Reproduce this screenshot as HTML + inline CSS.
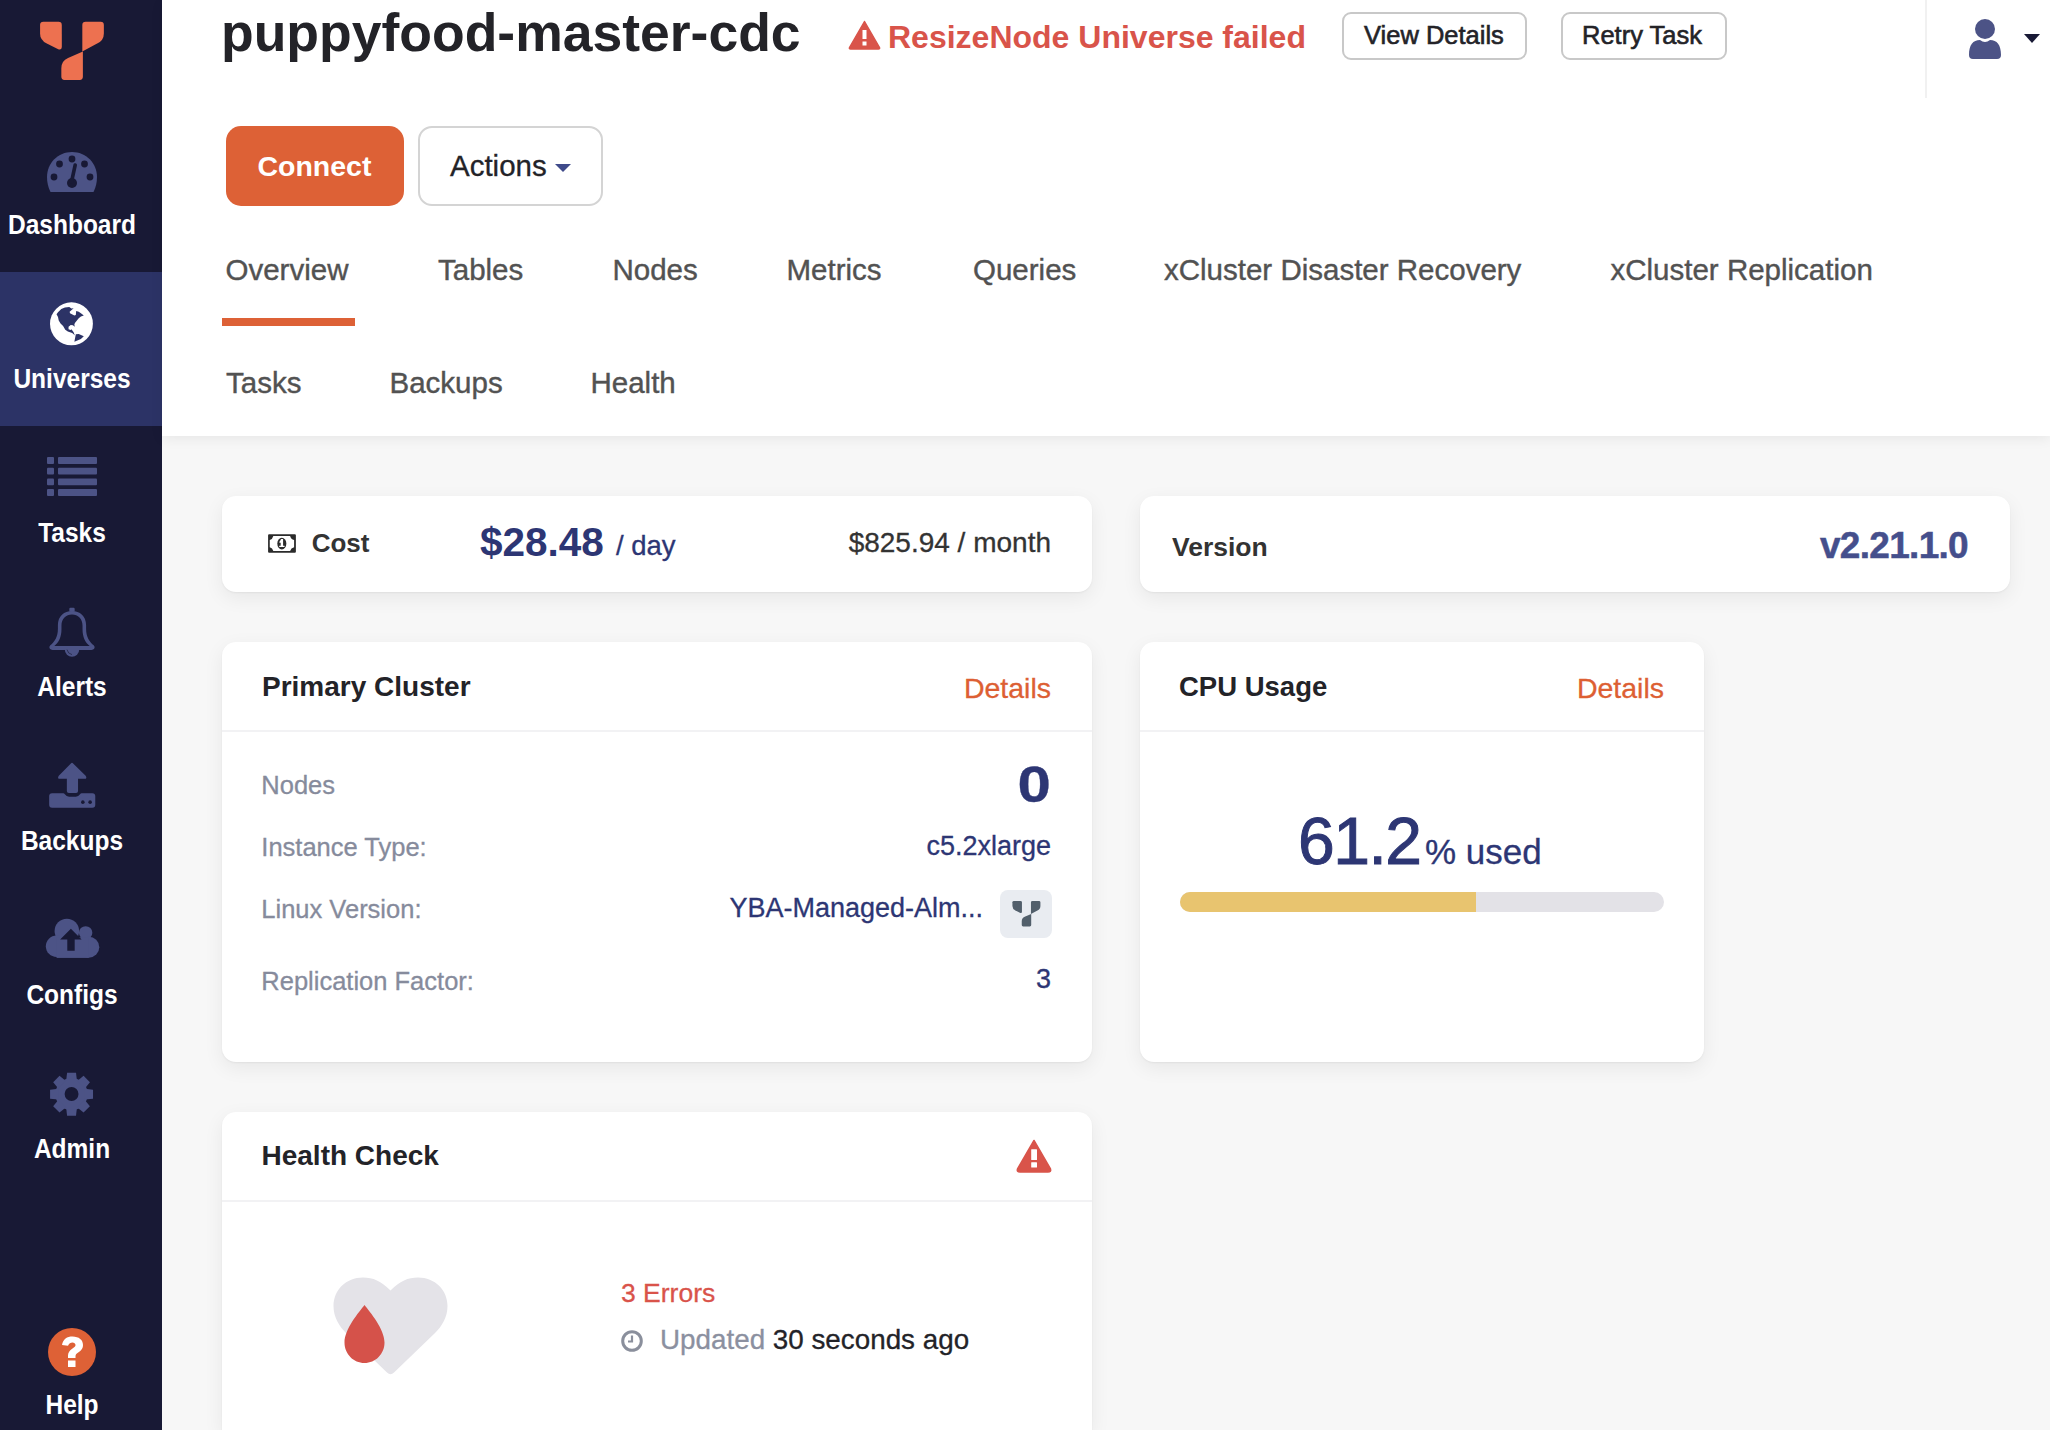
<!DOCTYPE html>
<html><head><meta charset="utf-8">
<style>
*{box-sizing:border-box;margin:0;padding:0}
html,body{width:2050px;height:1430px;overflow:hidden;background:#f7f7f7;font-family:"Liberation Sans",sans-serif}
.abs{position:absolute}
.t{position:absolute;white-space:nowrap;line-height:1}
.r{text-align:right}
.sk{-webkit-text-stroke-width:0.3px}
#side{position:absolute;left:0;top:0;width:162px;height:1430px;background:#181935}
.lbl{position:absolute;left:0;width:144px;text-align:center;color:#fff;font-weight:700;font-size:24.5px;line-height:1;white-space:nowrap;transform:scaleY(1.1);transform-origin:50% 20.7px}
#hdr{position:absolute;left:162px;top:0;width:1888px;height:436px;background:#fff;box-shadow:0 3px 12px rgba(0,0,0,0.065)}
.btn{position:absolute;border:2px solid #c8c8c8;border-radius:9px;background:#fff}
.tab{position:absolute;color:#525252;font-size:29.5px;white-space:nowrap;line-height:1;-webkit-text-stroke:0.4px #525252}
.card{position:absolute;background:#fff;border-radius:14px;box-shadow:0 1px 2px rgba(0,0,0,0.05),0 6px 20px rgba(0,0,0,0.065)}
.sep{position:absolute;left:0;right:0;height:2px;background:#f2f2f4}
.lab{position:absolute;white-space:nowrap;line-height:1;font-size:25.5px;color:#868b9c;-webkit-text-stroke:0.3px #868b9c}
.val{position:absolute;white-space:nowrap;line-height:1;font-size:27px;color:#2d3674;text-align:right;-webkit-text-stroke:0.3px #2d3674}
</style></head><body>

<div id="side">
  <!-- logo -->
  <svg class="abs" style="left:30px;top:10px" width="85" height="80" viewBox="0 0 1519 1430">
    <path d="M240 212 H510 Q568 212 568 270 V655 Q568 718 505 700 L300 600 Q180 540 180 420 V270 Q180 212 240 212 Z" fill="#ed7150"/>
    <path d="M995 212 H1262 Q1320 212 1320 270 V420 Q1320 545 1200 600 L935 742 V270 Q935 212 995 212 Z" fill="#ed7150"/>
    <path d="M945 740 V1195 Q945 1250 890 1250 H615 Q560 1250 560 1195 V1040 Q560 910 680 858 Z" fill="#ed7150"/>
  </svg>

  <!-- Dashboard -->
  <svg class="abs" style="left:47px;top:152px" width="50" height="40" viewBox="0 0 50 40">
    <path d="M25 0 C11 0 0 11 0 25 C0 30 1 35 3.5 40 H46.5 C49 35 50 30 50 25 C50 11 39 0 25 0 Z" fill="#4c5386"/>
    <circle cx="25" cy="7" r="3.4" fill="#181935"/>
    <circle cx="12.5" cy="12" r="3.4" fill="#181935"/>
    <circle cx="37.5" cy="12" r="3.4" fill="#181935"/>
    <circle cx="7" cy="25" r="3.4" fill="#181935"/>
    <circle cx="43" cy="25" r="3.4" fill="#181935"/>
    <circle cx="25" cy="31" r="5" fill="#181935"/>
    <path d="M24.5 30 L28.2 13" stroke="#181935" stroke-width="3.6" stroke-linecap="round"/>
  </svg>
  <div class="lbl" style="top:214px">Dashboard</div>

  <!-- Universes -->
  <div class="abs" style="left:0;top:272px;width:162px;height:154px;background:#2c3366"></div>
  <svg class="abs" style="left:46px;top:298px" width="52" height="52" viewBox="0 0 1430 1430">
    <circle cx="700" cy="710" r="590" fill="#fff"/>
    <path d="M290 450 L330 390 L420 300 L520 260 L640 250 L700 290 L760 280 L650 380 L660 420 L780 480 L820 470 L830 360 L900 380 L960 420 L1040 480 L960 510 L900 560 L850 620 L800 680 L780 720 L790 790 L740 750 L680 740 L620 790 L620 860 L680 880 L700 860 L760 940 L780 1000 L800 1030 L720 960 L600 920 L530 870 L470 770 L400 700 L350 620 L330 520 Z" fill="#2c3366"/>
    <path d="M820 1000 L900 990 L1040 1050 L960 1130 L780 1200 L800 1100 Z" fill="#2c3366"/>
  </svg>
  <div class="lbl" style="top:368px">Universes</div>

  <!-- Tasks -->
  <svg class="abs" style="left:47px;top:457px" width="50" height="39" viewBox="0 0 50 39">
    <g fill="#4c5386"><rect x="0" y="0" width="7" height="6.9" rx="1"/><rect x="11" y="0" width="39" height="6.9" rx="1"/><rect x="0" y="10.7" width="7" height="6.9" rx="1"/><rect x="11" y="10.7" width="39" height="6.9" rx="1"/><rect x="0" y="21.4" width="7" height="6.9" rx="1"/><rect x="11" y="21.4" width="39" height="6.9" rx="1"/><rect x="0" y="32.1" width="7" height="6.9" rx="1"/><rect x="11" y="32.1" width="39" height="6.9" rx="1"/></g>
  </svg>
  <div class="lbl" style="top:522px">Tasks</div>

  <!-- Alerts -->
  <svg class="abs" style="left:40px;top:600px" width="64" height="64" viewBox="0 0 1430 1430">
    <path d="M715 245 C540 245 400 360 400 560 L400 640 C400 820 330 930 230 1010 Q190 1050 220 1090 Q240 1115 280 1115 H1150 Q1190 1115 1210 1090 Q1240 1050 1200 1010 C1100 930 1030 820 1030 640 L1030 560 C1030 360 890 245 715 245 Z" fill="#4c5386"/>
    <path d="M715 325 C580 325 480 420 480 570 L480 650 C480 830 420 950 320 1030 H1110 C1010 950 950 830 950 650 L950 570 C950 420 850 325 715 325 Z" fill="#181935"/>
    <rect x="655" y="175" width="120" height="90" rx="25" fill="#4c5386"/>
    <path d="M555 1110 A160 160 0 0 0 875 1110 Z" fill="#4c5386"/>
    <path d="M605 1110 Q620 1200 715 1220" fill="none" stroke="#181935" stroke-width="14"/>
  </svg>
  <div class="lbl" style="top:676px">Alerts</div>

  <!-- Backups -->
  <svg class="abs" style="left:40px;top:752px" width="64" height="64" viewBox="0 0 1430 1430">
    <path d="M690 255 Q715 230 740 255 L1020 530 Q1060 600 1000 600 H850 V870 Q850 915 805 915 H645 Q600 915 600 870 V600 H440 Q380 600 420 530 Z" fill="#4c5386"/>
    <path d="M270 920 H520 Q540 920 555 945 Q590 1000 650 1000 H800 Q860 1000 895 945 Q910 920 930 920 H1170 Q1235 920 1235 985 V1180 Q1235 1245 1170 1245 H270 Q205 1245 205 1180 V985 Q205 920 270 920 Z" fill="#4c5386"/>
    <circle cx="957" cy="1120" r="40" fill="#181935"/><circle cx="1120" cy="1120" r="40" fill="#181935"/>
  </svg>
  <div class="lbl" style="top:830px">Backups</div>

  <!-- Configs -->
  <svg class="abs" style="left:40px;top:906px" width="64" height="64" viewBox="0 0 1430 1430">
    <g fill="#4c5386">
      <circle cx="600" cy="560" r="275"/>
      <circle cx="1020" cy="600" r="150"/>
      <circle cx="1090" cy="920" r="235"/>
      <circle cx="370" cy="900" r="240"/>
      <rect x="370" y="700" width="720" height="460"/>
    </g>
    <path d="M690 510 L930 750 H775 V1000 H610 V750 H450 Z" fill="#181935"/>
  </svg>
  <div class="lbl" style="top:984px">Configs</div>

  <!-- Admin -->
  <svg class="abs" style="left:40px;top:1062px" width="64" height="64" viewBox="0 0 1430 1430">
    <g transform="translate(705 720)" fill="#4c5386">
      <circle r="360"/>
      <path d="M-100 -480 H100 L120 -300 H-120 Z" transform="rotate(0)"/><path d="M-100 -480 H100 L120 -300 H-120 Z" transform="rotate(45)"/><path d="M-100 -480 H100 L120 -300 H-120 Z" transform="rotate(90)"/><path d="M-100 -480 H100 L120 -300 H-120 Z" transform="rotate(135)"/><path d="M-100 -480 H100 L120 -300 H-120 Z" transform="rotate(180)"/><path d="M-100 -480 H100 L120 -300 H-120 Z" transform="rotate(225)"/><path d="M-100 -480 H100 L120 -300 H-120 Z" transform="rotate(270)"/><path d="M-100 -480 H100 L120 -300 H-120 Z" transform="rotate(315)"/>
    </g>
    <circle cx="705" cy="715" r="155" fill="#181935"/>
  </svg>
  <div class="lbl" style="top:1138px">Admin</div>

  <!-- Help -->
  <svg class="abs" style="left:48px;top:1328px" width="48" height="48" viewBox="0 0 48 48">
    <circle cx="24" cy="24" r="24" fill="#de6136"/>
    <path d="M14 17 C15 11 19 8.5 24.5 8.5 C31 8.5 35 12 35 17 C35 21 32.5 23 29.5 25 C28 26 27.5 27 27.5 28.5 V30 H20 V27.5 C20 24.5 21.5 22.5 24.5 20.5 C26.5 19.2 27.5 18.5 27.5 17 C27.5 15.5 26 14.5 24.5 14.5 C22.5 14.5 21 15.7 20 17.7 Z" fill="#fff"/>
    <rect x="20" y="32.5" width="7.5" height="6.5" fill="#fff"/>
  </svg>
  <div class="lbl" style="top:1394px">Help</div>
</div>

<div id="hdr"></div>
<!-- header content (page coords) -->
<div class="t" style="left:221px;top:6.2px;font-size:53.5px;font-weight:700;color:#232328">puppyfood-master-cdc</div>
<svg class="abs" style="left:848px;top:20px" width="33" height="30" viewBox="0 0 33 30">
  <path d="M16.5 1.5 L31.5 27.5 Q32 29 30.5 29 H2.5 Q1 29 1.5 27.5 Z" fill="#d9544a" stroke="#d9544a" stroke-width="1.5" stroke-linejoin="round"/>
  <rect x="14.5" y="10" width="4" height="9" fill="#fff"/><rect x="14.5" y="21.5" width="4" height="4" fill="#fff"/>
</svg>
<div class="t" style="left:888px;top:21.2px;font-size:32px;font-weight:700;color:#d9544a">ResizeNode Universe failed</div>
<div class="btn" style="left:1342px;top:12px;width:185px;height:48px"></div>
<div class="t" style="left:1364px;top:22.5px;font-size:25.5px;color:#232328;-webkit-text-stroke:0.6px #232328">View Details</div>
<div class="btn" style="left:1561px;top:12px;width:166px;height:48px"></div>
<div class="t" style="left:1582px;top:22.5px;font-size:25.5px;color:#232328;-webkit-text-stroke:0.6px #232328">Retry Task</div>
<div class="abs" style="left:1925px;top:0;width:2px;height:98px;background:#f1f1f1"></div>
<svg class="abs" style="left:1968px;top:19px" width="34" height="40" viewBox="0 0 34 40">
  <circle cx="17" cy="10" r="10" fill="#4c5386"/>
  <path d="M1 36 C1 26 5 21 12 21 Q17 25 22 21 C29 21 33 26 33 36 Q33 40 29 40 H5 Q1 40 1 36 Z" fill="#4c5386"/>
</svg>
<svg class="abs" style="left:2024px;top:34px" width="16" height="9" viewBox="0 0 16 9"><path d="M0 0 H16 L8 9 Z" fill="#181935"/></svg>

<div class="abs" style="left:226px;top:126px;width:178px;height:80px;background:#dd6136;border-radius:15px"></div>
<div class="t" style="left:257.4px;top:151.8px;font-size:28.5px;font-weight:700;color:#fff">Connect</div>
<div class="btn" style="left:418px;top:126px;width:185px;height:80px;border-radius:14px;border-color:#d4d4d4"></div>
<div class="sk t" style="left:450px;top:150.9px;font-size:29.5px;color:#232328">Actions</div>
<svg class="abs" style="left:555px;top:164px" width="16" height="8" viewBox="0 0 16 8"><path d="M0 0 H16 L8 8 Z" fill="#3f4a8a"/></svg>

<div class="tab" style="left:225.5px;top:254.8px">Overview</div>
<div class="abs" style="left:222px;top:318px;width:133px;height:8px;background:#dd6136"></div>
<div class="tab" style="left:438px;top:254.8px">Tables</div>
<div class="tab" style="left:612.5px;top:254.8px">Nodes</div>
<div class="tab" style="left:786.5px;top:254.8px">Metrics</div>
<div class="tab" style="left:973px;top:254.8px">Queries</div>
<div class="tab" style="left:1164px;top:254.8px">xCluster Disaster Recovery</div>
<div class="tab" style="left:1610.5px;top:254.8px">xCluster Replication</div>
<div class="tab" style="left:226px;top:367.7px">Tasks</div>
<div class="tab" style="left:389.5px;top:367.7px">Backups</div>
<div class="tab" style="left:590.5px;top:367.7px">Health</div>

<!-- Cost card -->
<div class="card" style="left:222px;top:496px;width:870px;height:96px"></div>
<svg class="abs" style="left:262px;top:528px" width="40" height="30" viewBox="0 0 1907 1430">
  <path fill-rule="evenodd" d="M340 300 H1565 Q1615 300 1615 350 V1135 Q1615 1185 1565 1185 H340 Q290 1185 290 1135 V350 Q290 300 340 300 Z M540 380 H1340 Q1380 540 1530 570 V920 Q1380 950 1340 1100 H540 Q500 950 370 920 V570 Q500 540 540 380 Z" fill="#2b2b2b"/>
  <ellipse cx="945" cy="745" rx="215" ry="275" fill="#2b2b2b"/>
  <path d="M905 530 H1005 V850 H1075 V905 H820 V850 H890 V700 H830 V650 Q885 610 905 530 Z" fill="#fff"/>
</svg>
<div class="t" style="left:311.7px;top:530.4px;font-size:26px;font-weight:700;color:#333">Cost</div>
<div class="t" style="left:480px;top:521.7px;font-size:40.5px;font-weight:700;color:#2d3674">$28.48</div>
<div class="sk t" style="left:616px;top:531.7px;font-size:27.5px;color:#2d3674">/ day</div>
<div class="sk t r" style="right:999px;top:529.1px;font-size:28px;color:#333">$825.94 / month</div>

<!-- Version card -->
<div class="card" style="left:1140px;top:496px;width:870px;height:96px"></div>
<div class="t" style="left:1172px;top:533.6px;font-size:26.5px;font-weight:700;color:#333">Version</div>
<div class="t r" style="right:82px;top:526.9px;font-size:37px;font-weight:700;color:#454f8c;letter-spacing:-0.7px;-webkit-text-stroke:0.5px #454f8c">v2.21.1.0</div>

<!-- Primary cluster card -->
<div class="card" style="left:222px;top:642px;width:870px;height:420px">
  <div class="sep" style="top:88px"></div>
</div>
<div class="t" style="left:262px;top:672.5px;font-size:28px;font-weight:700;color:#232328">Primary Cluster</div>
<div class="sk t r" style="right:999px;top:673.7px;font-size:28.5px;color:#dd5f33">Details</div>
<div class="lab" style="left:261.3px;top:772.8px">Nodes</div>
<div class="lab" style="left:261.3px;top:835.2px">Instance Type:</div>
<div class="lab" style="left:261.3px;top:896.8px">Linux Version:</div>
<div class="lab" style="left:261.3px;top:968.8px">Replication Factor:</div>
<div class="val" style="right:999px;top:760px;font-size:50px;font-weight:700;transform:scaleX(1.2);transform-origin:100% 50%">0</div>
<div class="val" style="right:999px;top:833.4px">c5.2xlarge</div>
<div class="val" style="right:1067px;top:894.9px">YBA-Managed-Alm...</div>
<div class="abs" style="left:1000px;top:890px;width:52px;height:48px;background:#e9ecf1;border-radius:8px"></div>
<svg class="abs" style="left:1008.1px;top:894.6px" width="37.3" height="36.6" viewBox="0 0 1519 1430">
  <path d="M240 212 H510 Q568 212 568 270 V655 Q568 718 505 700 L300 600 Q180 540 180 420 V270 Q180 212 240 212 Z" fill="#525f6b"/>
  <path d="M995 212 H1262 Q1320 212 1320 270 V420 Q1320 545 1200 600 L935 742 V270 Q935 212 995 212 Z" fill="#525f6b"/>
  <path d="M945 740 V1195 Q945 1250 890 1250 H615 Q560 1250 560 1195 V1040 Q560 910 680 858 Z" fill="#525f6b"/>
</svg>
<div class="val" style="right:999px;top:966.1px">3</div>

<!-- CPU card -->
<div class="card" style="left:1140px;top:642px;width:564px;height:420px">
  <div class="sep" style="top:88px"></div>
</div>
<div class="t" style="left:1179px;top:673.3px;font-size:27.5px;font-weight:700;color:#232328">CPU Usage</div>
<div class="sk t r" style="right:386px;top:673.7px;font-size:28.5px;color:#dd5f33">Details</div>
<div class="t" style="left:1298px;top:808px;font-size:66px;color:#2d3674;letter-spacing:-1.5px;-webkit-text-stroke:1px #2d3674">61.2</div>
<div class="sk t" style="left:1425px;top:834px;font-size:35px;color:#2d3674">% used</div>
<div class="abs" style="left:1180px;top:892px;width:484px;height:20px;border-radius:10px;background:#e3e2e7;overflow:hidden">
  <div class="abs" style="left:0;top:0;width:296px;height:20px;background:#e8c46f"></div>
</div>

<!-- Health card -->
<div class="card" style="left:222px;top:1112px;width:870px;height:318px;border-radius:14px 14px 0 0">
  <div class="sep" style="top:88px"></div>
</div>
<div class="t" style="left:261.5px;top:1142.2px;font-size:28px;font-weight:700;color:#232328">Health Check</div>
<svg class="abs" style="left:1016px;top:1139px" width="36" height="34" viewBox="0 0 36 34">
  <path d="M18 1.5 L34.5 30 Q35.5 33 32 33 H4 Q0.5 33 1.5 30 Z" fill="#d9544a" stroke="#d9544a" stroke-width="1.5" stroke-linejoin="round"/>
  <rect x="15.2" y="10.3" width="5.8" height="10.7" rx="0.5" fill="#fff"/><rect x="15.2" y="23.2" width="5.8" height="5.3" rx="0.5" fill="#fff"/>
</svg>
<svg class="abs" style="left:333px;top:1277px" width="115" height="99" viewBox="0 0 115 99">
  <path d="M57.5 13.5 C48 4 40 0.5 30 0.5 C13 0.5 0.5 13 0.5 29 C0.5 40 6 49 13 56 L54 95.5 Q57.5 99 61 95.5 L102 56 C109 49 114.5 40 114.5 29 C114.5 13 102 0.5 85 0.5 C75 0.5 67 4 57.5 13.5 Z" fill="#e4e3e8"/>
</svg>
<svg class="abs" style="left:344px;top:1305px" width="41" height="58" viewBox="0 0 41 58">
  <path d="M20.5 0 C15 7 0.5 24 0.5 37.5 C0.5 49 9.5 58 20.5 58 C31.5 58 40.5 49 40.5 37.5 C40.5 24 26 7 20.5 0 Z" fill="#d5524a"/>
</svg>
<div class="sk t" style="left:621px;top:1279.6px;font-size:26.5px;color:#d9534a">3 Errors</div>
<svg class="abs" style="left:621px;top:1330px" width="22" height="22" viewBox="0 0 22 22">
  <circle cx="11" cy="11" r="9.3" fill="none" stroke="#8a8f9c" stroke-width="3"/>
  <path d="M11 5.5 V11.5 H7" fill="none" stroke="#8a8f9c" stroke-width="2.2"/>
</svg>
<div class="sk t" style="left:660px;top:1326.3px;font-size:27.8px;color:#8b90a0">Updated <span style="color:#232328">30 seconds ago</span></div>

</body></html>
